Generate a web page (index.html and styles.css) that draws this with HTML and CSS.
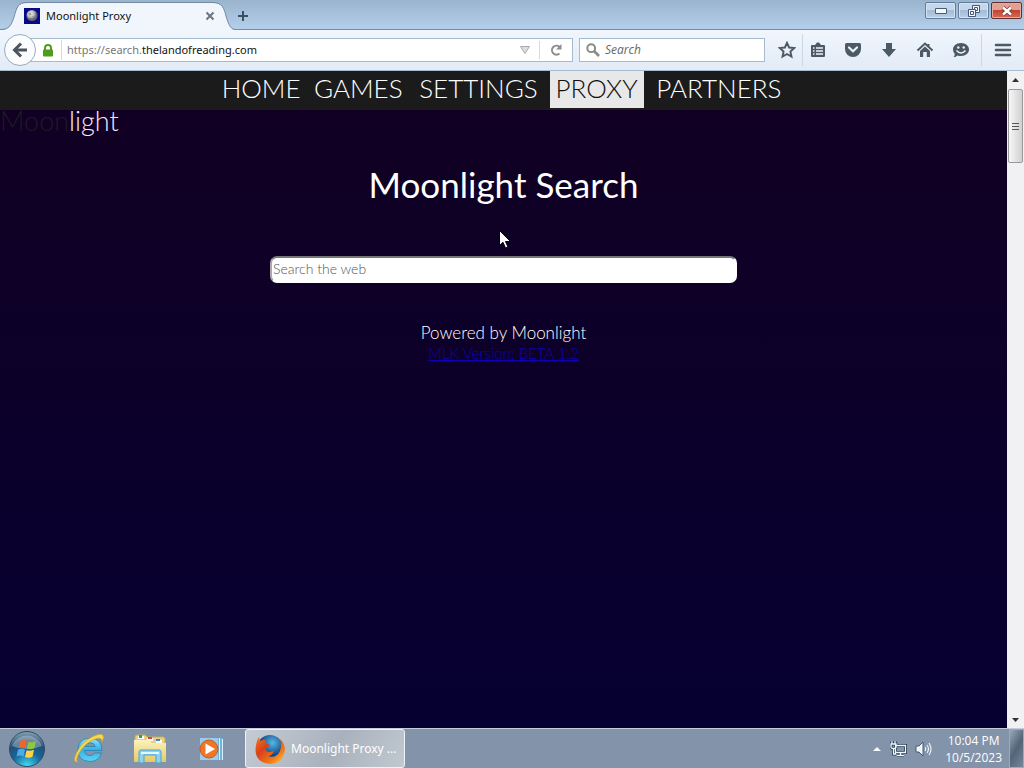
FILE: index.html
```html
<!DOCTYPE html>
<html lang="en">
<head>
<meta charset="utf-8">
<meta name="viewport" content="width=device-width, initial-scale=1">
<title>Moonlight Proxy</title>
<link rel="stylesheet" href="styles.css">
</head>
<body class="desktop">
<svg class="defs" width="0" height="0" aria-hidden="true">
  <defs>
    <radialGradient id="moon" cx=".4" cy=".35"><stop offset="0" stop-color="#f4f2e8"/><stop offset=".6" stop-color="#b9bab8"/><stop offset="1" stop-color="#62677c"/></radialGradient>
    <radialGradient id="orb" cx=".5" cy="1" r=".95"><stop offset="0" stop-color="#48e0f5"/><stop offset=".45" stop-color="#14679b"/><stop offset=".75" stop-color="#254f73"/><stop offset="1" stop-color="#7998ad"/></radialGradient>
    <linearGradient id="ie" x1="0" y1="0" x2="0" y2="1"><stop offset="0" stop-color="#8ce4fa"/><stop offset=".5" stop-color="#38aee2"/><stop offset="1" stop-color="#5ed5f3"/></linearGradient>
    <linearGradient id="fold" x1="0" y1="0" x2="0" y2="1"><stop offset="0" stop-color="#fbf2bd"/><stop offset="1" stop-color="#e6c867"/></linearGradient>
    <linearGradient id="fox" x1="0" y1="0" x2="1" y2="1"><stop offset="0" stop-color="#f27a1b"/><stop offset=".35" stop-color="#d9401a"/><stop offset=".7" stop-color="#ee7a1c"/><stop offset="1" stop-color="#ffd04a"/></linearGradient>
    <radialGradient id="globe" cx=".6" cy=".3"><stop offset="0" stop-color="#55b9e5"/><stop offset="1" stop-color="#12417f"/></radialGradient>
  </defs>
</svg>

<header class="chrome">
  <div class="titlebar">
    <div class="tab">
      <svg class="tab-shape" viewBox="0 0 236 28" preserveAspectRatio="none" aria-hidden="true"><path d="M0 28C9 28 11 24 14 15C17 5 18 1 27 1H213C222 1 224 6 226 14C229 24 231 28 236 28Z" fill="#f1f6fd"/><path d="M0 27.500C9 27.500 11 24 14 15C17 5 18 .5 27 .5H213C222 .5 224 6 226 14C229 24 231 27.500 236 27.500" fill="none" stroke="#748ba4"/></svg>
      <svg class="favicon" viewBox="0 0 16 16" aria-hidden="true"><path d="M0 0H16V16H0Z" fill="#080a85"/><circle cx="8" cy="7.500" r="5.500" fill="url(#moon)"/><circle cx="6" cy="6" r="1.300" fill="#999b9d"/><circle cx="9" cy="9" r="1" fill="#9a9ca0"/></svg>
      <span class="tab-title">Moonlight Proxy</span>
      <button class="plain tab-close" aria-label="Close tab"><svg width="10" height="10" viewBox="0 0 10 10"><path d="M1.500 1.500L8.500 8.500M8.500 1.500L1.500 8.500" stroke="#6b7580" stroke-width="2"/></svg></button>
    </div>
    <button class="plain new-tab" aria-label="New tab"><svg width="12" height="12" viewBox="0 0 12 12"><path d="M6 1V11M1 6H11" stroke="#3b4f63" stroke-width="2"/></svg></button>
    <div class="window-buttons">
      <button class="winbtn" aria-label="Minimize"><svg width="12" height="6" viewBox="0 0 12 6"><path d="M.5 .5H11.500V5.500H.5Z" fill="#f4f8fc" stroke="#4a5c76"/></svg></button>
      <button class="winbtn" aria-label="Restore"><svg width="12" height="12" viewBox="0 0 12 12" fill="#f4f8fc" stroke="#455775"><path d="M4.500 .5H11.500V7.500H4.500Z"/><path d="M6.500 2.500H9.500V5.500H6.500Z"/><path d="M.5 4.500H7.500V11.500H.5Z"/><path d="M2.500 6.500H5.500V9.500H2.500Z"/></svg></button>
      <button class="winbtn winbtn-close" aria-label="Close"><svg width="12" height="10" viewBox="0 0 12 10"><path d="M2 1.500L10 8.500M10 1.500L2 8.500" stroke="#6b3534" stroke-width="4"/><path d="M2 1.500L10 8.500M10 1.500L2 8.500" stroke="#fff" stroke-width="2.500"/></svg></button>
    </div>
  </div>

  <div class="toolbar">
    <button class="back" aria-label="Back"><svg width="16" height="16" viewBox="0 0 16 16" fill="none" stroke="#4c545d" stroke-width="3"><path d="M2 8H15"/><path d="M9 1.500L2.500 8L9 14.500"/></svg></button>
    <form class="address">
      <svg class="lock" width="12" height="13" viewBox="0 0 12 13" aria-hidden="true"><path d="M3 7V4A3 3 0 0 1 9 4V7" fill="none" stroke="#4f9b20" stroke-width="2"/><rect x="1" y="5.500" width="10" height="7" rx="1" fill="#4f9b20"/></svg>
      <label class="url" for="url"><span class="url-dim">https://search.</span>thelandofreading.com</label>
      <input class="url-input" id="url" type="text" aria-label="Address">
      <button type="button" class="plain" aria-label="History"><svg width="12" height="10" viewBox="0 0 12 10"><path d="M1.500 1.500H10.500L6 8.500Z" fill="#ddd" stroke="#aaa"/></svg></button>
      <button type="button" class="plain reload" aria-label="Reload"><svg width="14" height="14" viewBox="0 0 14 14"><path d="M10.500 10.500A4.500 4.500 0 1 1 10.500 3.800" fill="none" stroke="#8b8d90" stroke-width="2"/><path d="M12.500 1V6.500H7Z" fill="#8b8d90"/></svg></button>
    </form>
    <label class="search">
      <svg width="14" height="14" viewBox="0 0 14 14" fill="none" stroke="#8b8b87" aria-hidden="true"><circle cx="5.200" cy="5.200" r="3.900" stroke-width="2"/><path d="M8 8L13 13" stroke-width="2.600"/></svg>
      <input class="search-input" type="text" placeholder="Search" aria-label="Search">
    </label>
    <div class="tools">
      <button class="plain tool star" aria-label="Bookmark this page"><svg viewBox="0 0 18 18"><path d="M9 1.800L11.100 6.500L16.200 7L12.400 10.500L13.500 15.600L9 13L4.500 15.600L5.600 10.500L1.800 7L6.900 6.500Z" fill="none" stroke="#4c5966" stroke-width="1.900"/></svg></button>
      <button class="plain tool divided" aria-label="Bookmarks"><svg viewBox="0 0 18 18"><path d="M3 4H6L8 1.500H10L12 4H15Q16 4 16 5V15Q16 16 15 16H3Q2 16 2 15V5Q2 4 3 4Z" fill="#4c5966"/><path d="M4 7H5.500M7 7H14M4 10H5.500M7 10H14M4 13H5.500M7 13H14" stroke="#edf3fb" stroke-width="1.600"/></svg></button>
      <button class="plain tool" aria-label="Pocket"><svg viewBox="0 0 18 18"><path d="M2.500 2H15.500Q17 2 17 3.500V8A8 8 0 0 1 1 8V3.500Q1 2 2.500 2Z" fill="#4c5966"/><path d="M5 6.500L9 10.200L13 6.500" fill="none" stroke="#edf3fb" stroke-width="2.200" stroke-linecap="round"/></svg></button>
      <button class="plain tool" aria-label="Downloads"><svg viewBox="0 0 18 18"><path d="M6 2H12V8H16L9 16L2 8H6Z" fill="#4c5966"/></svg></button>
      <button class="plain tool" aria-label="Home"><svg viewBox="0 0 18 18"><path d="M1.500 9.500L9 2.500L16.500 9.500M12.500 3V6" fill="none" stroke="#4c5966" stroke-width="2"/><path d="M4 10L9 5.500L14 10V16H10.800V11H7.200V16H4Z" fill="#4c5966"/></svg></button>
      <button class="plain tool" aria-label="Hello"><svg viewBox="0 0 18 18"><path d="M9 2C14 2 17 5 17 8.500S14 15 9 15Q7 15 5.500 14.400Q4 16 1.500 16.200Q3 14.600 2.700 12.800Q1 11 1 8.500C1 5 4 2 9 2Z" fill="#4c5966"/><circle cx="6.300" cy="6.500" r="1.200" fill="#edf3fb"/><circle cx="11.700" cy="6.500" r="1.200" fill="#edf3fb"/><path d="M4.500 9.500Q9 14.500 13.500 9.500" fill="none" stroke="#edf3fb" stroke-width="1.500"/></svg></button>
      <button class="plain tool menu" aria-label="Open menu"><svg viewBox="0 0 18 18"><path d="M2 4H16M2 9H16M2 14H16" stroke="#4c5966" stroke-width="2.600" stroke-linecap="round"/></svg></button>
    </div>
  </div>
</header>

<div class="viewport">
  <div class="page">
    <nav class="nav">
      <div class="nav-items">
        <a class="nav-link" href="#home">HOME</a>
        <a class="nav-link" href="#games">GAMES</a>
        <a class="nav-link" href="#settings">SETTINGS</a>
        <a class="nav-link nav-current" href="#proxy">PROXY</a>
        <a class="nav-link" href="#partners">PARTNERS</a>
      </div>
    </nav>
    <div class="brand"><span class="brand-dark">Moon</span>light</div>
    <main class="content">
      <h1 class="heading">Moonlight Search</h1>
      <input class="web-search" type="text" placeholder="Search the web" aria-label="Search the web">
      <p class="powered">Powered by Moonlight<br><a class="version" href="#version">MLK Version: BETA 1.2</a></p>
    </main>
  </div>
  <div class="scrollbar" aria-hidden="true">
    <svg width="17" height="18" viewBox="0 0 17 18"><path d="M5 11H12L8.500 7Z" fill="#333"/></svg>
    <div class="thumb"><svg width="7" height="9" viewBox="0 0 7 9"><path d="M0 1.500H7M0 4.500H7M0 7.500H7" stroke="#555"/></svg></div>
    <svg class="down" width="17" height="17" viewBox="0 0 17 17"><path d="M5 7H12L8.500 11Z" fill="#333"/></svg>
  </div>
</div>

<footer class="taskbar">
  <button class="plain start" aria-label="Start"><svg width="38" height="38" viewBox="0 0 38 38"><circle cx="19" cy="19" r="17.500" fill="url(#orb)" stroke="#2d4c69"/><path d="M4 16A16 16 0 0 1 34 16Q19 22 4 16Z" fill="#fff" opacity=".3"/><path d="M12.500 11Q16 9 19 11L17.500 18Q14 16 10.500 18Z" fill="#f0642a"/><path d="M20.500 11.800Q24 13 28 11L26.500 18Q23 20 19 18.600Z" fill="#8fc83f"/><path d="M10 19.700Q14 18 17 19.700L15.500 26.500Q12 24.500 8.500 26.500Z" fill="#50a9e8"/><path d="M18.600 20.300Q22 21.500 26 19.700L24.500 26.700Q21 28.500 17 27Z" fill="#ffd247"/></svg></button>
  <button class="plain launch" aria-label="Internet Explorer"><svg width="34" height="34" viewBox="0 0 34 34"><path d="M30 18.500H12.500Q13 23.500 18 23.500Q21 23.500 22.500 21H29.500Q27 29.500 18 29.500Q6 29 5.800 18Q6.500 6.500 18 6.200Q30 6.500 30 18.500ZM12.700 14.500H23.300Q22.500 10.800 18 10.800Q13.800 10.800 12.700 14.500Z" fill="url(#ie)" stroke="#2184b8" stroke-width=".8"/><path d="M6 30Q0 31 4.500 21Q10 9 22 4Q31 0 31.500 5Q31.500 7 30 10Q30.500 5 24.500 6.500Q13 10 6.500 22Q3 29 6 30Z" fill="#f8d848" stroke="#d3a527" stroke-width=".6"/></svg></button>
  <button class="plain launch" aria-label="Windows Explorer"><svg width="34" height="32" viewBox="0 0 34 32"><path d="M2 4Q2 2 4 2H12L14 4H30Q32 4 32 6V28H2Z" fill="#e8d080" stroke="#c9ad55"/><path d="M5 3H11V6H5ZM14 5H20V8H14ZM23 7H29V10H23Z" fill="#fff"/><path d="M6 2H9V5H6Z" fill="#32a344"/><path d="M15 4H19V6H15Z" fill="#db4835"/><path d="M23 6H27V8H23Z" fill="#3689ce"/><path d="M1 7H16L19 10H33V29H1Z" fill="url(#fold)"/><path d="M6 30V19Q6 17 8 17H26Q28 17 28 19V30H23V22H11V30Z" fill="#8ed2ee" stroke="#4ba5ce"/><path d="M8 20H26" stroke="#e0f7ff" stroke-width="2"/></svg></button>
  <button class="plain launch" aria-label="Media Player"><svg width="30" height="28" viewBox="0 0 30 28"><path d="M4 3H27V25H4Z" fill="#75b3da"/><path d="M23.500 3V25M26.500 4V25" stroke="#d7efff"/><path d="M4 3H22V25H4Z" fill="#9ccced"/><circle cx="13" cy="14" r="9" fill="#ee7726" stroke="#cf591b"/><path d="M9.500 8.500L19 14L9.500 19.500Z" fill="#fff"/></svg></button>
  <button class="task"><svg width="32" height="32" viewBox="0 0 32 32" aria-hidden="true"><circle cx="16" cy="15" r="13" fill="url(#globe)"/><path d="M5 4Q5 7 7 8Q9 6 12 7Q11 9 12 10L16 12Q15 14 12 15Q11 18 15 19Q17 19 20 18Q18 23 14 23Q22 26 26 18Q28 13 26 6Q31 11 31 17Q29 31 16 31Q2 30 1.500 17Q2 8 5 4Z" fill="url(#fox)"/></svg><span class="task-title">Moonlight Proxy ...</span></button>
  <div class="tray">
    <svg width="10" height="6" viewBox="0 0 10 6" aria-hidden="true"><path d="M1 5H9L5 1Z" fill="#f5f9ff"/></svg>
    <svg width="17" height="16" viewBox="0 0 17 16" fill="none" aria-hidden="true"><path d="M5.500 4.500H15.500V11.500H5.500ZM10.500 12V14M7 14.500H14M1 3H6V6Q6 7.500 3.500 7.500Q1 7.500 1 6ZM2 0V3M5 0V3M3.500 8V13H6" stroke="#283d50" stroke-width="3"/><path d="M5.500 4.500H15.500V11.500H5.500ZM10.500 12V14M7 14.500H14M1 3H6V6Q6 7.500 3.500 7.500Q1 7.500 1 6ZM2 0V3M5 0V3M3.500 8V13H6" stroke="#eef5fc" stroke-width="1.300"/></svg>
    <svg width="17" height="16" viewBox="0 0 17 16" aria-hidden="true"><path d="M1 5H4L8 1V15L4 11H1Z" fill="#f2f6fa" stroke="#445a70"/><path d="M10 6Q11.500 8 10 10M12 4Q15 8 12 12M14 2Q18 8 14 14" fill="none" stroke="#eaf2fa" stroke-width="1.200"/></svg>
  </div>
  <div class="clock"><time>10:04 PM</time><time>10/5/2023</time></div>
  <button class="show-desktop" aria-label="Show desktop"></button>
</footer>

<svg class="cursor" width="12" height="19" viewBox="0 0 12 19" aria-hidden="true"><path d="M.5 .5V15.500L4 12.300L6.500 18L9 17L6.500 11.500H11.500Z" fill="#fff" stroke="#080018"/></svg>
</body>
</html>
```
FILE: styles.css
```css
* { box-sizing: border-box; }

.desktop {
  position: relative;
  display: flex;
  flex-direction: column;
  height: 100vh;
  margin: 0;
  overflow: hidden;
  font: 11px/16px "Noto Sans", "Open Sans", sans-serif;
  color: #111;
}

.defs { position: absolute; }
svg { display: block; flex: none; }
button, input { font: inherit; }

.plain {
  display: flex;
  align-items: center;
  justify-content: center;
  padding: 0;
  border: 0;
  background: none;
}

/* Browser window */
.chrome {
  flex: none;
  background: #e8f0fa;
  border-bottom: 1px solid #a9bccb;
}

.titlebar {
  display: flex;
  height: 30px;
  padding-top: 2px;
  background: linear-gradient(#9bb4cd, #b4cfeb);
  border-bottom: 1px solid #748ba4;
}

.tab {
  position: relative;
  display: flex;
  align-items: center;
  width: 236px;
  height: 28px;
  padding: 0 20px 0 24px;
  gap: 6px;
}

.tab-shape {
  position: absolute;
  inset: 0;
  width: 100%;
  height: 100%;
}

.favicon, .tab-title, .tab-close { position: relative; }
.favicon { width: 16px; height: 16px; }
.tab-title { flex: 1; }
.tab-close { width: 12px; }
.new-tab { width: 14px; }

.window-buttons {
  display: flex;
  gap: 2px;
  height: 17px;
  margin-left: auto;
  padding-right: 2px;
}

.winbtn {
  display: flex;
  align-items: center;
  justify-content: center;
  width: 31px;
  padding: 0;
  border: 1px solid #647c9c;
  border-radius: 2px;
  background: linear-gradient(#c5d7eb 50%, #a3bbd5 50%, #b9d0e7);
  box-shadow: inset 0 0 0 1px #d5e4f2;
}

.winbtn-close {
  border-color: #632d35;
  background: linear-gradient(#e2a092 48%, #c34431 50%, #d46d55);
  box-shadow: inset 0 0 0 1px #e7aaa0;
}

.toolbar {
  display: flex;
  align-items: center;
  height: 40px;
  padding-left: 4px;
  background: linear-gradient(#f1f6fd, #e2ebf6);
}

.back {
  position: relative;
  display: flex;
  align-items: center;
  justify-content: center;
  width: 32px;
  height: 32px;
  padding: 0;
  border: 1px solid #9aacbd;
  border-radius: 50%;
  background: #fafcfe;
}

.address, .search {
  display: flex;
  align-items: center;
  height: 24px;
  border: 1px solid #a5bccf;
  background: #fff;
}

.address {
  flex: 1;
  min-width: 0;
  margin-left: -6px;
  padding-left: 11px;
}

.url {
  margin-left: 7px;
  padding-left: 5px;
  border-left: 1px solid #d5dade;
  line-height: 20px;
  white-space: nowrap;
}

.url-dim { color: #777; }

.url-input, .search-input {
  flex: 1;
  width: 0;
  min-width: 0;
  padding: 0;
  border: 0;
  outline: 0;
  background: none;
}

.reload {
  width: 33px;
  height: 18px;
  margin-left: 8px;
  border-left: 1px solid #d5dade;
}

.search {
  flex: none;
  width: 186px;
  margin-left: 6px;
  padding-left: 6px;
  gap: 5px;
}

.search-input { font: italic 12px/20px "Open Sans", sans-serif; }
.search-input::placeholder { color: #666; opacity: 1; }

.tools { display: flex; align-items: center; margin-left: 7px; }
.tool { width: 36px; height: 32px; }
.tool svg { width: 18px; height: 18px; }
.star { width: 30px; }
.divided { width: 31px; margin-right: 2px; border-left: 1px solid #ccd7e2; }
.menu { width: 43px; margin-left: 2px; border-left: 1px solid #ccd7e2; }

/* Web page */
.viewport { display: flex; flex: 1; min-height: 0; }

.page {
  flex: 1;
  min-width: 0;
  overflow: hidden;
  background: linear-gradient(#120022, #0c002a 50%, #060032);
  color: #fff;
  font-family: Lato, sans-serif;
  font-weight: 300;
}

.nav {
  display: flex;
  justify-content: center;
  height: 39px;
  background: #1b1b1b;
}

.nav-items {
  display: grid;
  grid-template-columns: 88fr 98fr 134fr 94fr 142fr;
  gap: 4px;
  width: 573px;
  height: 37px;
}

.nav-link {
  color: #fff;
  font-size: 26px;
  line-height: 34px;
  text-align: center;
  text-decoration: none;
}

.nav-current { background: #e8e8e8; color: #111; }

.brand { font-size: 27px; line-height: 22px; color: #f0e8ff; }
.brand-dark { color: #1d1b25; }

.content {
  display: flex;
  flex-direction: column;
  align-items: center;
}

.heading {
  margin: 32px 0 0;
  font-size: 35px;
  font-weight: 400;
  line-height: 40px;
}

.web-search {
  width: 467px;
  max-width: 90%;
  height: 27px;
  margin-top: 52px;
  padding: 0 1px 2px;
  border: 2px solid #fff;
  border-top-color: #777;
  border-left-color: #aaa;
  border-radius: 7px;
  background: #fff;
  font: 300 14px/20px Lato, sans-serif;
}

.web-search::placeholder { color: #555; opacity: 1; }

.powered {
  margin: 40px 0 0;
  font-size: 17px;
  line-height: 20px;
  text-align: center;
}

.version { color: #1000b4; font-size: 15px; }

.scrollbar {
  display: flex;
  flex-direction: column;
  width: 17px;
  background: #f1f1f3;
}

.thumb {
  display: flex;
  align-items: center;
  justify-content: center;
  height: 74px;
  margin: 0 1px;
  border: 1px solid #999;
  border-radius: 2px;
  background: linear-gradient(90deg, #f7f7f7, #d0d0d3);
}

.down { margin-top: auto; }

/* Taskbar */
.taskbar {
  display: flex;
  flex: none;
  align-items: center;
  height: 40px;
  padding-left: 8px;
  border-top: 1px solid #c4cbd9;
  background: #8393aa;
  color: #fff;
}

.start { width: 38px; margin-right: 12px; }
.launch { width: 61px; }

.task {
  display: flex;
  align-items: center;
  width: 160px;
  height: 39px;
  margin-left: 4px;
  padding: 0 8px;
  gap: 5px;
  border: 1px solid #eef2f5;
  border-radius: 3px;
  background: linear-gradient(120deg, #c4cbd3, #a9b1bd 55%, #c0c8d0);
  color: #fff;
}

.task-title { font-size: 12px; white-space: nowrap; }

.tray { display: flex; align-items: center; gap: 8px; margin-left: auto; }

.clock {
  display: flex;
  flex-direction: column;
  margin: 0 7px 0 13px;
  font: 12px/17px "Open Sans", sans-serif;
  text-align: center;
}

.show-desktop {
  width: 15px;
  height: 39px;
  padding: 0;
  border: 1px solid #9ca9b9;
  background: linear-gradient(120deg, #9aa8b8, #536478 50%, #75869c);
}

/* The pointer floats over the page */
.cursor { position: absolute; left: 499px; top: 230px; }
```
